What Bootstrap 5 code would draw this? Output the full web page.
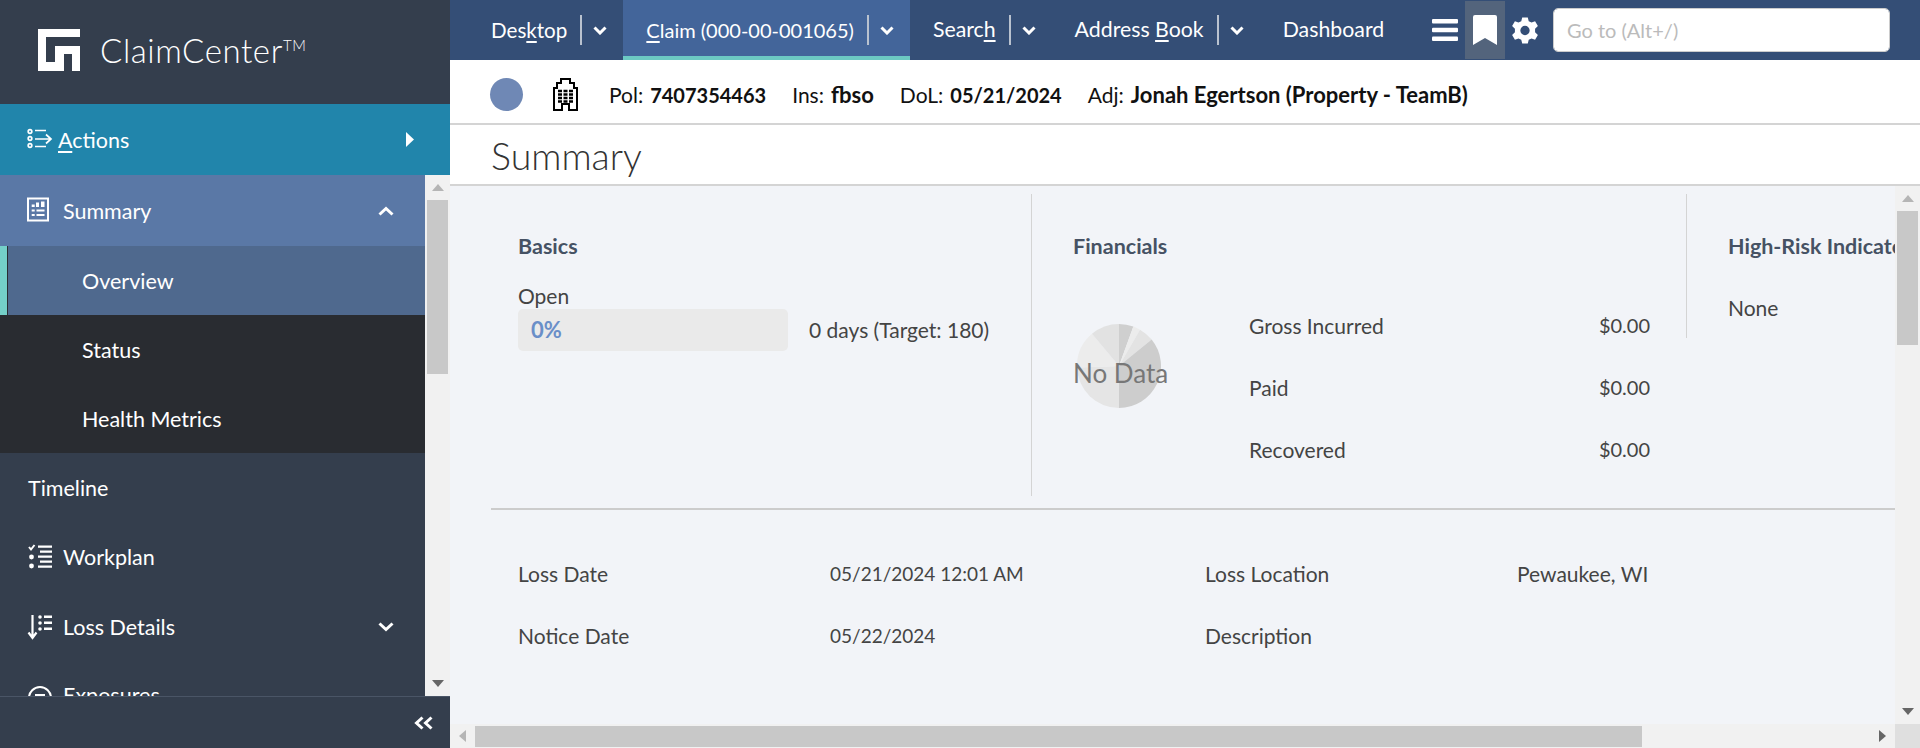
<!DOCTYPE html>
<html lang="en">
<head>
<meta charset="UTF-8">
<title>ClaimCenter - Summary</title>
<link href="https://cdn.jsdelivr.net/npm/bootstrap@5.3.0/dist/css/bootstrap.min.css" rel="stylesheet">
<style>
    html, body { height: 100%; overflow: hidden; }
    body { font-family: Lato, "Open Sans", sans-serif; font-size: 21px; line-height: 1.2; color: #444; background: #f2f4f8; }
    u { text-underline-offset: 3px; }

    .app-shell { height: 748px; }
    .side-panel { width: 450px; flex: none; background: #343e4d; color: #fff; font-size: 21.5px; }
    .logo-box { height: 104px; flex: none; padding: 29px 0 0 38px; gap: 20px; }
    .logo-name { font-size: 33px; font-weight: 300; letter-spacing: .6px; line-height: 42px; }
    .logo-name sup { font-size: 15px; top: -12px; vertical-align: baseline; position: relative; }
    .action-row { height: 71px; flex: none; background: #2185ab; padding: 0 28px; }
    .action-row .side-icon { margin-right: 4px; }
    .action-arrow { margin-right: 8px; }
    .side-mid { min-height: 0; }
    .side-list { width: 425px; flex: none; overflow: hidden; }
    .side-row { height: 71px; padding: 0 28px; flex: none; }
    .side-row.is-short { height: 69px; }
    .side-row.is-open { background: #5a78a6; }
    .side-sub { height: 69px; padding-left: 82px; flex: none; background: #292c31; }
    .side-sub.is-on { background: #4f698e; border-left: 7px solid #74cfc8; padding-left: 75px; box-shadow: inset 1px 0 0 #292c31; }
    .side-text { margin-top: 3px; }
    .side-icon { width: 26px; height: 26px; margin-right: 9px; flex: none; overflow: visible; }
    .side-chev { margin-left: auto; margin-right: 3px; }
    .side-foot { height: 52px; flex: none; border-top: 1px solid #4a5566; padding-right: 16px; }

    .fake-vbar { width: 25px; flex: none; background: #f1f1f1; padding: 0 2px; }
    .bar-thumb { background: #c8c8c8; width: 21px; }
    .arrow-box { height: 25px; flex: none; }
    .side-mid .bar-thumb { height: 174px; }
    .main-vthumb { height: 134px; }
    .main-panel { min-width: 0; }

    .top-strip { height: 60px; background: #344e76; color: #fff; padding: 0 30px 0 18px; flex: none; font-size: 21.3px; }
    .top-tab { height: 60px; padding: 0 16px 0 23px; }
    .top-tab.is-current { background: #43659a; border-bottom: 4px solid #6cc9c3; padding-top: 4px; font-size: 20px; }
    .tab-narrow { font-size: 20.6px; }
    .tab-sep { width: 2px; height: 30px; background: #b9c2cf; margin: 0 11px 0 13px; }
    .icon-btn { height: 58px; width: 40px; }
    .icon-btn.is-on { background: #53647c; }
    .goto-box { width: 337px; height: 44px; font-size: 20px; padding: 0 13px; border: 1px solid #ccc; border-radius: 5px; font-family: inherit; }
    .goto-box::placeholder { color: #bbb; }

    .info-strip { height: 65px; background: #fff; border-bottom: 2px solid #d4d4d4; color: #111; padding: 5px 0 0 40px; flex: none; }
    .info-strip b { font-weight: 700; margin-left: 7px; font-size: 20px; }
    .info-strip b.wide-val { font-size: 22px; }
    .info-dot { width: 33px; height: 33px; border-radius: 50%; background: #6f88b5; margin-right: 30px; }
    .bldg-icon { margin-right: 31px; }
    .info-item { margin: 2px 26px 0 0; }
    .title-strip { height: 61px; background: #fff; border-bottom: 2px solid #d4d4d4; padding: 2px 0 0 41px; flex: none; }
    .title-strip h1 { font-size: 37.5px; font-weight: 300; margin: 0; color: #333; }

    .page-area { min-height: 0; }
    .page-body { min-width: 0; overflow: hidden; padding: 8px 0 0 41px; }
    .top-cols { height: 316px; border-bottom: 2px solid #ccc; }
    .col-basics { width: 541px; flex: none; height: 302px; padding: 40px 0 0 27px; border-right: 1px solid #d4d4d4; }
    .col-money { width: 654px; flex: none; height: 302px; padding: 40px 0 0 41px; }
    .col-risk { flex: none; width: 300px; height: 144px; padding: 40px 0 0 41px; border-left: 1px solid #d4d4d4; }
    .sect-head { color: #465264; font-weight: 700; font-size: 21.5px; height: 24px; white-space: nowrap; }
    .open-label { margin-top: 25px; height: 26px; }
    .open-bar { width: 270px; height: 42px; background: #eaeaea; border-radius: 5px; margin-right: 21px; padding-left: 13px; }
    .open-bar span { color: #6a8fc8; font-weight: 700; font-size: 22px; }
    .money-wrap { margin-top: 55px; }
    .pie-wrap { width: 95px; height: 130px; position: relative; }
    .pie-svg { position: absolute; left: 4px; top: 11px; }
    .pie-note { position: absolute; left: 0; top: 45px; width: 100%; text-align: center; color: #777; font-size: 26px; white-space: nowrap; }
    .money-rows { width: 401px; margin-left: 81px; }
    .money-row { height: 62px; }
    .money-val { font-size: 20px; }
    .none-text { margin-top: 37px; }
    .detail-rows { padding: 51px 0 0 27px; }
    .detail-row { height: 62px; }
    .detail-cell { width: 312px; flex: none; }
    .detail-cell.is-date { width: 375px; font-size: 19px; line-height: 25px; }

    .fake-hbar { height: 24px; flex: none; background: #f1f1f1; }
    .hbar-left { width: 25px; }
    .hbar-thumb { width: 1167px; height: 21px; margin-top: 1px; background: #c8c8c8; }
    .hbar-right { width: 25px; margin-left: auto; }
    .hbar-corner { width: 25px; height: 24px; background: #dfdfdf; }
</style>
</head>
<body>
<div class="app-shell d-flex">
    <!-- left nav -->
    <aside class="side-panel d-flex flex-column">
        <div class="logo-box d-flex">
            <svg width="42" height="42" viewBox="0 0 42 42" fill="#fff"><path d="M0 0H42V8H8V33H17V17H42V42H34V25H26V42H0Z"/></svg>
            <div class="logo-name">ClaimCenter<sup>TM</sup></div>
        </div>
        <div class="action-row d-flex align-items-center">
            <svg class="side-icon" viewBox="0 0 26 26" fill="none" stroke="#fff" stroke-width="1.7"><circle cx="2" cy="4.500" r="1.800"/><circle cx="2" cy="11.500" r="1.800"/><circle cx="2" cy="18.500" r="1.800"/><path d="M7 3.500H18M7 12H23M7 19.500H18M18 7.500L23 12L18 16.500"/></svg>
            <span class="side-text"><u>A</u>ctions</span>
            <svg class="action-arrow ms-auto" width="9" height="15" viewBox="0 0 9 15" fill="#fff"><path d="M1 0L9 7.500L1 15Z"/></svg>
        </div>
        <div class="side-mid d-flex flex-grow-1">
            <div class="side-list d-flex flex-column">
                <div class="side-row is-open d-flex align-items-center">
                    <svg class="side-icon" viewBox="0 0 26 26" fill="#fff"><rect x="0" y=".5" width="20" height="22" fill="none" stroke="#fff" stroke-width="2"/><path d="M3.700 6.500h3V9h-3zM8 4.500h3V9H8zM13 3.500h3.500V9H13zM3.700 11.500h3v2h-3zM8.500 11.500h8v2h-8zM3.700 16h3v2h-3zM8.500 16h8v2h-8z"/></svg>
                    <span class="side-text">Summary</span>
                    <svg class="side-chev" width="16" height="10" viewBox="0 0 16 10" fill="none" stroke="#fff" stroke-width="3"><path d="M1.500 8.500L8 2.500L14.500 8.500"/></svg>
                </div>
                <div class="side-sub is-on d-flex align-items-center"><span class="side-text">Overview</span></div>
                <div class="side-sub d-flex align-items-center"><span class="side-text">Status</span></div>
                <div class="side-sub d-flex align-items-center"><span class="side-text">Health Metrics</span></div>
                <div class="side-row is-short d-flex align-items-center"><span class="side-text">Timeline</span></div>
                <div class="side-row is-short d-flex align-items-center">
                    <svg class="side-icon" viewBox="0 0 26 26" fill="#fff"><path d="M1 3L3 5.500L6.500 1" fill="none" stroke="#fff" stroke-width="2"/><circle cx="3.500" cy="13" r="2.400"/><circle cx="3.500" cy="22" r="2.400"/><path d="M10 1.500h14v2.200H10zM12 6.500h12v2.200H12zM10 11.500h14v2.200H10zM12 16.500h12v2.200H12zM10 21.500h14v2.200H10z"/></svg>
                    <span class="side-text">Workplan</span>
                </div>
                <div class="side-row d-flex align-items-center">
                    <svg class="side-icon" viewBox="0 0 26 26" fill="#fff"><path d="M4.500 1V23M0.500 18.500L4.500 24L8.500 18.500" fill="none" stroke="#fff" stroke-width="2.200"/><circle cx="12" cy="3" r="1.800"/><circle cx="12" cy="9" r="1.800"/><circle cx="12" cy="15" r="1.800"/><path d="M16 1.500h8v2.400h-8zM16 7.500h8v2.400h-8zM16 13.500h8v2.400h-8z"/></svg>
                    <span class="side-text">Loss Details</span>
                    <svg class="side-chev" width="16" height="10" viewBox="0 0 16 10" fill="none" stroke="#fff" stroke-width="3"><path d="M1.500 1.500L8 7.500L14.500 1.500"/></svg>
                </div>
                <div class="side-row d-flex align-items-center">
                    <svg class="side-icon" viewBox="0 0 26 26" fill="none" stroke="#fff" stroke-width="2"><circle cx="12" cy="13" r="11"/><path d="M7 10h10M7 14h10"/></svg>
                    <span class="side-text mt-0 mb-1">Exposures</span>
                </div>
            </div>
            <div class="fake-vbar d-flex flex-column align-items-center">
                <div class="arrow-box d-flex align-items-center"><svg width="12" height="7" viewBox="0 0 12 7" fill="#b5b5b5"><path d="M6 0L12 7H0Z"/></svg></div>
                <div class="bar-thumb"></div>
                <div class="arrow-box mt-auto d-flex align-items-center"><svg width="12" height="7" viewBox="0 0 12 7" fill="#666"><path d="M0 0H12L6 7Z"/></svg></div>
            </div>
        </div>
        <div class="side-foot d-flex align-items-center justify-content-end">
            <svg width="20" height="14" viewBox="0 0 20 14" fill="none" stroke="#fff" stroke-width="3"><path d="M8.500 1.500L2.500 7L8.500 12.500M17.500 1.500L11.500 7L17.500 12.500"/></svg>
        </div>
    </aside>

    <div class="main-panel d-flex flex-column flex-grow-1">
        <!-- top tabs -->
        <nav class="top-strip d-flex align-items-center">
            <div class="top-tab tab-narrow d-flex align-items-center"><span>Des<u>k</u>top</span><i class="tab-sep"></i><svg width="14" height="9" viewBox="0 0 14 9" fill="none" stroke="#fff" stroke-width="3"><path d="M1.500 1.500L7 7L12.500 1.500"/></svg></div>
            <div class="top-tab is-current d-flex align-items-center"><span><u>C</u>laim (000-00-001065)</span><i class="tab-sep"></i><svg width="14" height="9" viewBox="0 0 14 9" fill="none" stroke="#fff" stroke-width="3"><path d="M1.500 1.500L7 7L12.500 1.500"/></svg></div>
            <div class="top-tab d-flex align-items-center"><span>Searc<u>h</u></span><i class="tab-sep"></i><svg width="14" height="9" viewBox="0 0 14 9" fill="none" stroke="#fff" stroke-width="3"><path d="M1.500 1.500L7 7L12.500 1.500"/></svg></div>
            <div class="top-tab d-flex align-items-center"><span>Address <u>B</u>ook</span><i class="tab-sep"></i><svg width="14" height="9" viewBox="0 0 14 9" fill="none" stroke="#fff" stroke-width="3"><path d="M1.500 1.500L7 7L12.500 1.500"/></svg></div>
            <div class="top-tab d-flex align-items-center"><span>Dashboard</span></div>
            <div class="ms-auto d-flex align-items-center">
                <div class="icon-btn d-flex align-items-center justify-content-center"><svg width="26" height="22" viewBox="0 0 26 22" fill="#fff"><rect y="0" width="26" height="4.500" rx="1"/><rect y="8.700" width="26" height="4.500" rx="1"/><rect y="17.500" width="26" height="4.500" rx="1"/></svg></div>
                <div class="icon-btn is-on d-flex align-items-center justify-content-center"><svg width="24" height="30" viewBox="0 0 24 30" fill="#fff"><path d="M2 0H22Q24 0 24 2V30L12 23L0 30V2Q0 0 2 0Z"/></svg></div>
                <div class="icon-btn d-flex align-items-center justify-content-center me-2"><svg width="28" height="29" viewBox="0 0 30 30"><path fill="#fff" fill-rule="evenodd" d="M12 1h6l1 4 3 1.500 3.800-1.500 3 5.200-3 2.800v4l3 2.800-3 5.200-3.800-1.500-3 1.500-1 4h-6l-1-4-3-1.500-3.800 1.500-3-5.200 3-2.800v-4l-3-2.800 3-5.200 3.800 1.500 3-1.500zM15 10a5 5 0 1 0 0 10a5 5 0 1 0 0-10z"/></svg></div>
                <input class="goto-box form-control" placeholder="Go to (Alt+/)">
            </div>
        </nav>
        <div class="info-strip d-flex align-items-center">
            <div class="info-dot"></div>
            <svg class="bldg-icon" width="25" height="33" viewBox="0 0 25 33" fill="none" stroke="#000" stroke-width="2"><path d="M1 32V10H4V5H8V1H17V5H21V10H24V32H16V26H9V32Z"/><path d="M5 13h15M5 16.500h15M5 20h15M5 23.500h15" stroke-width="2.300" stroke-dasharray="4 1.500"/></svg>
            <div class="info-item">Pol:<b>7407354463</b></div>
            <div class="info-item">Ins:<b class="wide-val">fbso</b></div>
            <div class="info-item">DoL:<b>05/21/2024</b></div>
            <div class="info-item">Adj:<b class="wide-val">Jonah Egertson (Property - TeamB)</b></div>
        </div>
        <div class="title-strip d-flex align-items-center"><h1>Summary</h1></div>

        <div class="page-area d-flex flex-grow-1">
            <div class="page-body flex-grow-1">
                <div class="top-cols d-flex">
                    <div class="col-basics">
                        <div class="sect-head">Basics</div>
                        <div class="open-label">Open</div>
                        <div class="d-flex align-items-center">
                            <div class="open-bar d-flex align-items-center"><span>0%</span></div>
                            <div>0 days (Target: 180)</div>
                        </div>
                    </div>
                    <div class="col-money">
                        <div class="sect-head">Financials</div>
                        <div class="money-wrap d-flex">
                            <div class="pie-wrap">
                                <svg class="pie-svg" width="84" height="84" viewBox="0 0 84 84">
                                    <path fill="#cfcfcf" d="M42 42V0A42 42 0 0 1 56.360 2.530Z"/>
                                    <path fill="#ececec" d="M42 42L56.360 2.530A42 42 0 0 1 63 5.630Z"/>
                                    <path fill="#e3e3e3" d="M42 42L63 5.630A42 42 0 0 1 74.640 15.570Z"/>
                                    <path fill="#cdcdcd" d="M42 42L74.640 15.570A42 42 0 0 1 42 84Z"/>
                                    <path fill="#e5e5e5" d="M42 42V84A42 42 0 0 1 .03 43.470Z"/>
                                    <path fill="#ececec" d="M42 42L.03 43.470A42 42 0 0 1 15 9.830Z"/>
                                    <path fill="#e2e2e2" d="M42 42L15 9.830A42 42 0 0 1 42 0Z"/>
                                </svg>
                                <div class="pie-note">No Data</div>
                            </div>
                            <div class="money-rows">
                                <div class="money-row d-flex justify-content-between"><span>Gross Incurred</span><span class="money-val">$0.00</span></div>
                                <div class="money-row d-flex justify-content-between"><span>Paid</span><span class="money-val">$0.00</span></div>
                                <div class="money-row d-flex justify-content-between"><span>Recovered</span><span class="money-val">$0.00</span></div>
                            </div>
                        </div>
                    </div>
                    <div class="col-risk">
                        <div class="sect-head">High-Risk Indicators</div>
                        <div class="none-text">None</div>
                    </div>
                </div>
                <div class="detail-rows">
                    <div class="detail-row d-flex">
                        <div class="detail-cell">Loss Date</div>
                        <div class="detail-cell is-date">05/21/2024 12:01 AM</div>
                        <div class="detail-cell">Loss Location</div>
                        <div class="detail-cell">Pewaukee, WI</div>
                    </div>
                    <div class="detail-row d-flex">
                        <div class="detail-cell">Notice Date</div>
                        <div class="detail-cell is-date">05/22/2024</div>
                        <div class="detail-cell">Description</div>
                    </div>
                </div>
            </div>
            <div class="fake-vbar d-flex flex-column align-items-center">
                <div class="arrow-box d-flex align-items-center"><svg width="12" height="7" viewBox="0 0 12 7" fill="#b5b5b5"><path d="M6 0L12 7H0Z"/></svg></div>
                <div class="bar-thumb main-vthumb"></div>
                <div class="arrow-box mt-auto d-flex align-items-center"><svg width="12" height="7" viewBox="0 0 12 7" fill="#666"><path d="M0 0H12L6 7Z"/></svg></div>
            </div>
        </div>
        <div class="fake-hbar d-flex align-items-center">
            <div class="hbar-left d-flex align-items-center justify-content-center"><svg width="7" height="12" viewBox="0 0 7 12" fill="#b5b5b5"><path d="M7 0V12L0 6Z"/></svg></div>
            <div class="hbar-thumb"></div>
            <div class="hbar-right d-flex align-items-center justify-content-center"><svg width="7" height="12" viewBox="0 0 7 12" fill="#666"><path d="M0 0V12L7 6Z"/></svg></div>
            <div class="hbar-corner"></div>
        </div>
    </div>
</div>
<script src="https://cdn.jsdelivr.net/npm/bootstrap@5.3.0/dist/js/bootstrap.bundle.min.js"></script>
</body>
</html>
